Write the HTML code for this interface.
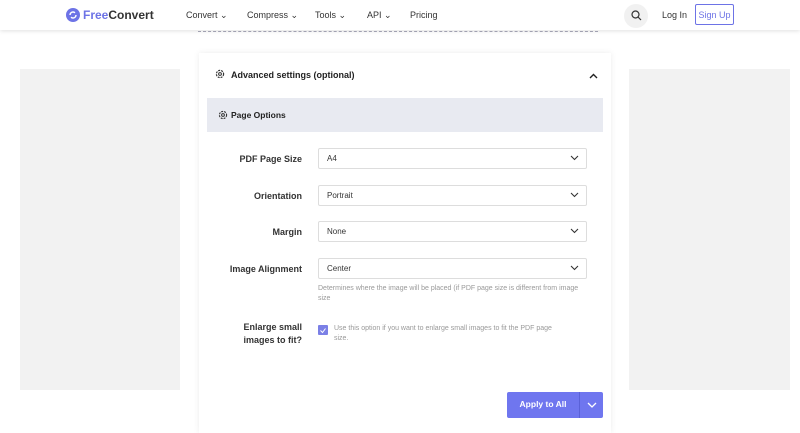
<!DOCTYPE html><html><head><style>
*{box-sizing:border-box;margin:0;padding:0}
body{width:800px;height:426px;overflow:hidden;background:#fff;font-family:"Liberation Sans",sans-serif;position:relative;color:#222}
.a{position:absolute}
.hdr{left:0;top:0;width:800px;height:30px;background:#fff;box-shadow:0 1px 4px rgba(0,0,0,.12);z-index:2}
.nav{font-size:9px;color:#333;top:10px}
.side{background:#f2f2f2;top:69px;height:321px;width:160px}
.card{left:199px;top:53px;width:412px;height:380px;background:#fff;box-shadow:0 0 6px rgba(0,0,0,.08)}
.lbl{font-size:9px;font-weight:bold;color:#333;text-align:right;width:120px;left:182px}
.sel{left:318px;width:269px;height:21px;border:1px solid #ddd;border-radius:2px;font-size:8px;color:#333;padding:5px 8px}
.sel svg{position:absolute;right:7px;top:6px}
</style></head><body>
<div class="a hdr">
 <svg class="a" style="left:66px;top:8px" width="14" height="14" viewBox="0 0 14 14"><circle cx="7" cy="7" r="7" fill="#6d73e6"/><path d="M4 7a3 3 0 0 1 5-2.2M10 7a3 3 0 0 1-5 2.2" stroke="#fff" stroke-width="1.4" fill="none"/></svg>
 <div class="a" style="left:83px;top:8px;font-size:12px;font-weight:bold;color:#333"><span style="color:#6d73e6">Free</span>Convert</div>
 <div class="a nav" style="left:186px">Convert ⌄</div>
 <div class="a nav" style="left:247px">Compress ⌄</div>
 <div class="a nav" style="left:315px">Tools ⌄</div>
 <div class="a nav" style="left:367px">API ⌄</div>
 <div class="a nav" style="left:410px">Pricing</div>
 <div class="a" style="left:624px;top:4px;width:24px;height:24px;border-radius:12px;background:#f1f1f1"></div>
 <svg class="a" style="left:631px;top:10px" width="11" height="11" viewBox="0 0 11 11"><circle cx="4.5" cy="4.5" r="3.5" stroke="#333" fill="none" stroke-width="1.2"/><path d="M7 7l3 3" stroke="#333" stroke-width="1.2"/></svg>
 <div class="a nav" style="left:662px">Log In</div>
 <div class="a" style="left:695px;top:4px;width:39px;height:21px;border:1px solid #6d73e6;border-radius:2px;font-size:9px;color:#6d73e6;padding-top:5px;text-align:center">Sign Up</div>
</div>
<div class="a" style="left:198px;top:31px;width:400px;border-top:1px dashed #aab"></div>
<div class="a side" style="left:20px"></div>
<div class="a side" style="left:629px;width:161px"></div>
<div class="a card"></div>
<svg class="a" style="left:215px;top:69px" width="10" height="10" viewBox="0 0 10 10"><circle cx="5" cy="5" r="3.6" stroke="#333" stroke-width="1.2" fill="none" stroke-dasharray="2 1"/><circle cx="5" cy="5" r="1.4" stroke="#333" fill="none"/></svg>
<div class="a" style="left:231px;top:70px;font-size:9px;font-weight:bold">Advanced settings (optional)</div>
<svg class="a" style="left:589px;top:73px" width="9" height="6" viewBox="0 0 9 6"><path d="M1 5l3.5-3.5L8 5" stroke="#222" stroke-width="1.4" fill="none"/></svg>
<div class="a" style="left:207px;top:98px;width:396px;height:34px;background:#e8eaf1"></div>
<svg class="a" style="left:218px;top:110px" width="10" height="10" viewBox="0 0 10 10"><circle cx="5" cy="5" r="3.6" stroke="#333" stroke-width="1.1" fill="none" stroke-dasharray="2 1"/><circle cx="5" cy="5" r="1.4" stroke="#333" fill="none"/></svg>
<div class="a" style="left:231px;top:110px;font-size:8.5px;font-weight:bold">Page Options</div>
<div class="a lbl" style="top:154px">PDF Page Size</div>
<div class="a sel" style="top:148px">A4<svg width="9" height="6" viewBox="0 0 9 6"><path d="M1 1l3.5 3.5L8 1" stroke="#333" stroke-width="1.1" fill="none"/></svg></div>
<div class="a lbl" style="top:191px">Orientation</div>
<div class="a sel" style="top:185px">Portrait<svg width="9" height="6" viewBox="0 0 9 6"><path d="M1 1l3.5 3.5L8 1" stroke="#333" stroke-width="1.1" fill="none"/></svg></div>
<div class="a lbl" style="top:227px">Margin</div>
<div class="a sel" style="top:221px">None<svg width="9" height="6" viewBox="0 0 9 6"><path d="M1 1l3.5 3.5L8 1" stroke="#333" stroke-width="1.1" fill="none"/></svg></div>
<div class="a lbl" style="top:264px">Image Alignment</div>
<div class="a sel" style="top:258px">Center<svg width="9" height="6" viewBox="0 0 9 6"><path d="M1 1l3.5 3.5L8 1" stroke="#333" stroke-width="1.1" fill="none"/></svg></div>
<div class="a" style="left:318px;top:284px;width:270px;font-size:7px;color:#999;line-height:10px">Determines where the image will be placed (if PDF page size is different from image size</div>
<div class="a lbl" style="top:321px;line-height:13px">Enlarge small<br>images to fit?</div>
<div class="a" style="left:318px;top:325px;width:10px;height:10px;background:#7b80e6;border-radius:1px"></div>
<svg class="a" style="left:319px;top:327px" width="8" height="7" viewBox="0 0 8 7"><path d="M1.5 3.5l2 2 3-4" stroke="#fff" stroke-width="1" fill="none"/></svg>
<div class="a" style="left:334px;top:324px;width:230px;font-size:7px;color:#999;line-height:10px">Use this option if you want to enlarge small images to fit the PDF page size.</div>
<div class="a" style="left:507px;top:392px;width:96px;height:26px;background:#6f76ef;border-radius:2px"></div>
<div class="a" style="left:579px;top:392px;width:1px;height:26px;background:#5a61d8"></div>
<div class="a" style="left:507px;top:399px;width:72px;text-align:center;font-size:8.5px;font-weight:bold;color:#fff">Apply to All</div>
<svg class="a" style="left:587px;top:402px" width="10" height="6" viewBox="0 0 10 6"><path d="M1 1l4 4 4-4" stroke="#fff" stroke-width="1.3" fill="none"/></svg>
</body></html>
